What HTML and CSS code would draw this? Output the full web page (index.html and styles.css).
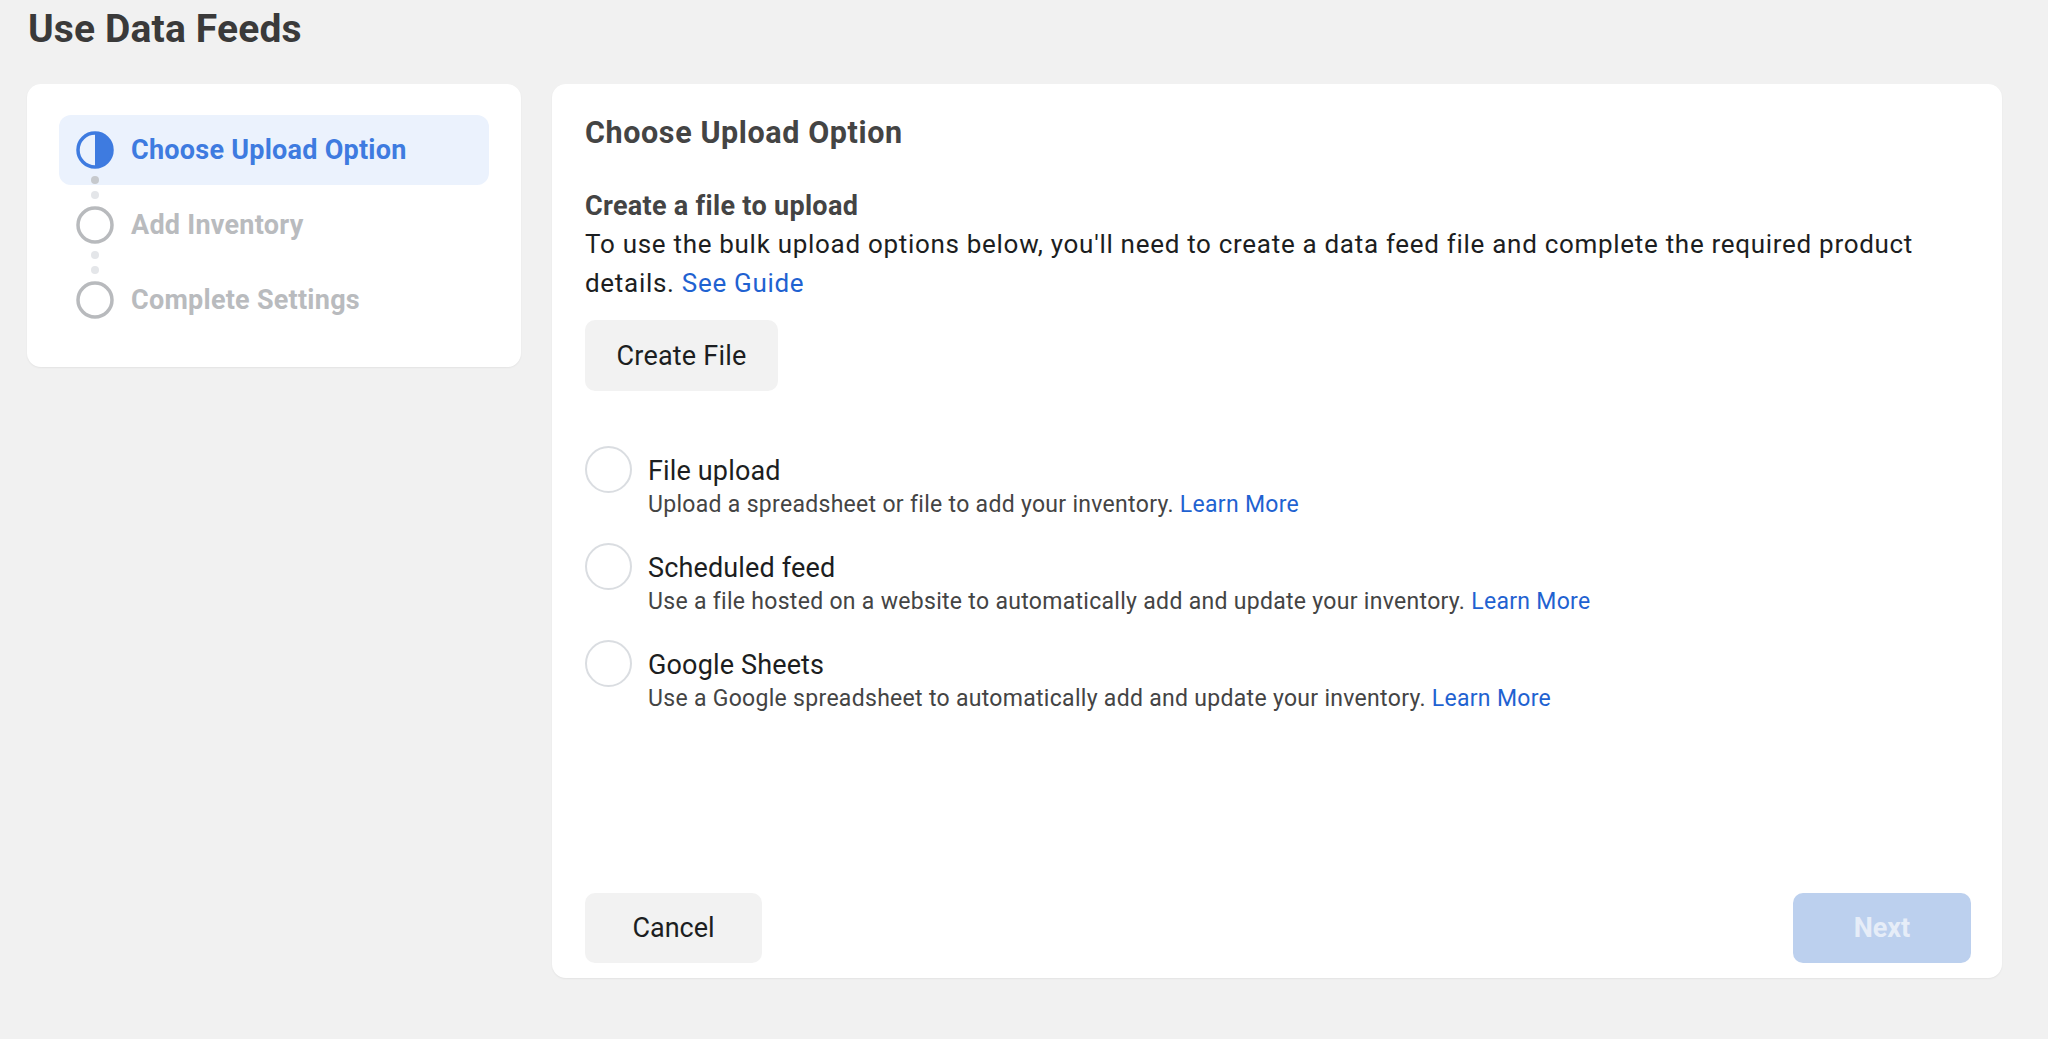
FILE: index.html
```html
<!DOCTYPE html>
<html lang="en">
<head>
<meta charset="utf-8">
<title>Use Data Feeds</title>
<link rel="stylesheet" href="styles.css">
</head>
<body>
<h1 class="page-title">Use Data Feeds</h1>
<div class="layout">
  <aside class="steps-card">
    <ol class="steps">
      <li class="step step-active">
        <svg class="step-icon" viewBox="0 0 38 38" aria-hidden="true">
          <circle cx="19" cy="19" r="17" fill="none" stroke="#3e7be0" stroke-width="3.5"/>
          <path d="M19 2 A17 17 0 0 1 19 36 Z" fill="#3e7be0"/>
        </svg>
        <span class="step-label">Choose Upload Option</span>
      </li>
      <li class="step">
        <svg class="step-icon" viewBox="0 0 38 38" aria-hidden="true">
          <circle cx="19" cy="19" r="17" fill="none" stroke="#b8babd" stroke-width="3.5"/>
        </svg>
        <span class="step-label">Add Inventory</span>
      </li>
      <li class="step step-last">
        <svg class="step-icon" viewBox="0 0 38 38" aria-hidden="true">
          <circle cx="19" cy="19" r="17" fill="none" stroke="#b8babd" stroke-width="3.5"/>
        </svg>
        <span class="step-label">Complete Settings</span>
      </li>
    </ol>
  </aside>
  <main class="main-card">
    <h2 class="card-title">Choose Upload Option</h2>
    <h3 class="section-title">Create a file to upload</h3>
    <p class="section-text">To use the bulk upload options below, you'll need to create a data feed file and complete the required product details. <a class="link" href="#">See Guide</a></p>
    <button class="btn btn-create" type="button">Create File</button>
    <ul class="options">
      <li class="option">
        <span class="radio"></span>
        <div class="option-body">
          <div class="option-title">File upload</div>
          <div class="option-desc">Upload a spreadsheet or file to add your inventory. <a class="link" href="#">Learn More</a></div>
        </div>
      </li>
      <li class="option">
        <span class="radio"></span>
        <div class="option-body">
          <div class="option-title">Scheduled feed</div>
          <div class="option-desc">Use a file hosted on a website to automatically add and update your inventory. <a class="link" href="#">Learn More</a></div>
        </div>
      </li>
      <li class="option">
        <span class="radio"></span>
        <div class="option-body">
          <div class="option-title">Google Sheets</div>
          <div class="option-desc">Use a Google spreadsheet to automatically add and update your inventory. <a class="link" href="#">Learn More</a></div>
        </div>
      </li>
    </ul>
    <div class="footer">
      <button class="btn btn-cancel" type="button">Cancel</button>
      <button class="btn btn-next" type="button">Next</button>
    </div>
  </main>
</div>
</body>
</html>
```
FILE: styles.css
```css
* { box-sizing: border-box; }

html, body {
  margin: 0;
  padding: 0;
}

body {
  background: #f1f1f1;
  font-family: Roboto, "Liberation Sans", Arial, sans-serif;
  color: #1c1e21;
  width: 2048px;
  height: 1039px;
  overflow: hidden;
  padding: 6px 46px 0 27px;
}

.page-title {
  margin: 0;
  font-size: 39px;
  line-height: 46px;
  font-weight: 700;
  color: #3a3a3a;
  padding-left: 1px;
  letter-spacing: 0.15px;
}

.layout {
  margin-top: 32px;
  display: flex;
  align-items: flex-start;
  gap: 31px;
}

/* Sidebar steps */
.steps-card {
  width: 494px;
  background: #fff;
  border-radius: 14px;
  padding: 31px 32px 32px 32px;
  box-shadow: 0 1px 2px rgba(0,0,0,0.06);
}

.steps {
  list-style: none;
  margin: 0;
  padding: 0;
  display: flex;
  flex-direction: column;
  gap: 5px;
}

.step {
  position: relative;
  height: 70px;
  display: flex;
  align-items: center;
  gap: 17px;
  padding-left: 17px;
  border-radius: 12px;
}

.step-active {
  background: #ebf2fd;
}

.step-icon {
  width: 38px;
  height: 38px;
  flex: none;
}

.step::after {
  content: "";
  position: absolute;
  left: 32px;
  top: 61px;
  width: 8px;
  height: 8px;
  border-radius: 50%;
  background: #e4e6e9;
  box-shadow: 0 15px 0 #e4e6e9;
}

.step-active::after {
  background: #c6c9cd;
}

.step-last::after {
  display: none;
}

.step-label {
  font-size: 27px;
  font-weight: 700;
  color: #b9bbbe;
  letter-spacing: 0.25px;
}

.step-active .step-label {
  color: #3e7be0;
}

/* Main card */
.main-card {
  flex: 1;
  height: 894px;
  background: #fff;
  border-radius: 14px;
  padding: 31px 31px 15px 33px;
  display: flex;
  flex-direction: column;
  align-items: flex-start;
  box-shadow: 0 1px 2px rgba(0,0,0,0.06);
}

.card-title {
  margin: 0;
  font-size: 30.5px;
  line-height: 36px;
  font-weight: 700;
  color: #444;
  letter-spacing: 0.6px;
}

.section-title {
  margin: 38px 0 0 0;
  font-size: 27px;
  line-height: 34px;
  font-weight: 700;
  color: #444;
  letter-spacing: 0.3px;
}

.section-text {
  margin: 2px 0 0 0;
  font-size: 26px;
  line-height: 39px;
  color: #1c1e21;
  letter-spacing: 0.7px;
}

.link {
  color: #1f62d1;
  text-decoration: none;
}

.btn {
  border: none;
  border-radius: 10px;
  font-family: inherit;
  cursor: pointer;
}

.btn-create {
  margin-top: 17px;
  height: 71px;
  width: 193px;
  padding: 0;
  background: #f2f2f2;
  color: #1c1e21;
  font-size: 27px;
  letter-spacing: 0.2px;
}

.options {
  list-style: none;
  margin: 55px 0 0 0;
  padding: 0;
  display: flex;
  flex-direction: column;
  gap: 22px;
}

.option {
  display: flex;
  align-items: flex-start;
  gap: 16px;
}

.radio {
  width: 47px;
  height: 47px;
  border-radius: 50%;
  border: 2px solid #dadde1;
  flex: none;
}

.option-body {
  padding-top: 8px;
}

.option-title {
  font-size: 27px;
  line-height: 34px;
  color: #1c1e21;
  letter-spacing: 0.15px;
}

.option-desc {
  font-size: 23px;
  line-height: 33px;
  color: #444;
  letter-spacing: 0.3px;
}

.footer {
  margin-top: auto;
  width: 100%;
  display: flex;
  justify-content: space-between;
  align-items: center;
}

.btn-cancel {
  width: 177px;
  height: 70px;
  background: #f2f2f2;
  color: #1c1e21;
  font-size: 27px;
}

.btn-next {
  width: 178px;
  height: 70px;
  background: #bcd0ee;
  color: #e6edf8;
  font-size: 27px;
  font-weight: 700;
}
```
